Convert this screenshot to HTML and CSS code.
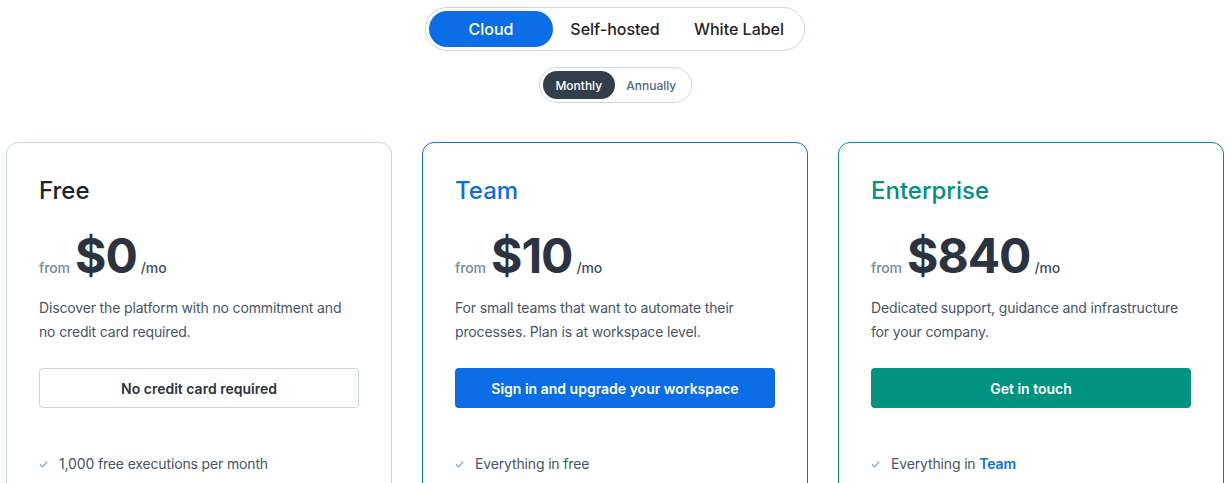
FILE: index.html
```html
<!DOCTYPE html>
<html lang="en">
<head>
<meta charset="utf-8">
<title>Pricing</title>
<link rel="stylesheet" href="styles.css">
</head>
<body>
<div class="page">
  <div class="switch">
    <button class="switch-btn active">Cloud</button>
    <button class="switch-btn">Self-hosted</button>
    <button class="switch-btn">White Label</button>
  </div>
  <div class="period">
    <button class="period-btn active">Monthly</button>
    <button class="period-btn">Annually</button>
  </div>
  <div class="cards">
    <div class="card card-free">
      <h2 class="card-title">Free</h2>
      <div class="price"><span class="from">from</span><span class="amount">$0</span><span class="per">/mo</span></div>
      <p class="desc">Discover the platform with no commitment and no credit card required.</p>
      <button class="cta cta-outline">No credit card required</button>
      <ul class="features">
        <li><svg class="check" viewBox="0 0 10 10"><path d="M1.5 5.2 L4 7.5 L8.5 2.5" fill="none" stroke="currentColor" stroke-width="1.4" stroke-linecap="round" stroke-linejoin="round"/></svg>1,000 free executions per month</li>
      </ul>
    </div>
    <div class="card card-team">
      <h2 class="card-title">Team</h2>
      <div class="price"><span class="from">from</span><span class="amount">$10</span><span class="per">/mo</span></div>
      <p class="desc">For small teams that want to automate their processes. Plan is at workspace level.</p>
      <button class="cta cta-blue">Sign in and upgrade your workspace</button>
      <ul class="features">
        <li><svg class="check" viewBox="0 0 10 10"><path d="M1.5 5.2 L4 7.5 L8.5 2.5" fill="none" stroke="currentColor" stroke-width="1.4" stroke-linecap="round" stroke-linejoin="round"/></svg>Everything in free</li>
      </ul>
    </div>
    <div class="card card-ent">
      <h2 class="card-title">Enterprise</h2>
      <div class="price"><span class="from">from</span><span class="amount">$840</span><span class="per">/mo</span></div>
      <p class="desc">Dedicated support, guidance and infrastructure for your company.</p>
      <button class="cta cta-teal">Get in touch</button>
      <ul class="features">
        <li><svg class="check" viewBox="0 0 10 10"><path d="M1.5 5.2 L4 7.5 L8.5 2.5" fill="none" stroke="currentColor" stroke-width="1.4" stroke-linecap="round" stroke-linejoin="round"/></svg>Everything in&nbsp;<strong class="hl">Team</strong></li>
      </ul>
    </div>
  </div>
</div>
</body>
</html>
```
FILE: styles.css
```css
* { box-sizing: border-box; }
html, body { margin: 0; padding: 0; background: #ffffff; }
body {
  font-family: Inter, "Noto Sans", "Liberation Sans", sans-serif;
  color: #1f2328;
  height: 483px;
  overflow: hidden;
}
.page {
  padding: 7px 6px 0;
  height: 483px;
  overflow: hidden;
  display: flex;
  flex-direction: column;
  align-items: center;
}
button { font-family: inherit; cursor: pointer; }

.switch {
  display: grid;
  grid-template-columns: repeat(3, 124px);
  padding: 3px;
  border: 1px solid #cdd8e4;
  border-radius: 22px;
}
.switch-btn {
  height: 36px;
  border: 0;
  background: transparent;
  border-radius: 18px;
  font-size: 16px;
  font-weight: 500;
  color: #1f2328;
}
.switch-btn.active { background: #0b6ee6; color: #ffffff; }

.period {
  margin-top: 16px;
  display: grid;
  grid-template-columns: repeat(2, 72.5px);
  padding: 3px;
  border: 1px solid #cdd8e4;
  border-radius: 18px;
}
.period-btn {
  height: 28px;
  border: 0;
  background: transparent;
  border-radius: 14px;
  font-size: 12px;
  font-weight: 500;
  color: #506885;
}
.period-btn.active { background: #333e4b; color: #ffffff; }

.cards {
  align-self: stretch;
  margin-top: 39px;
  display: grid;
  grid-template-columns: repeat(3, 1fr);
  gap: 30px;
}
.card {
  border: 1px solid #c6d5e4;
  border-radius: 12px;
  padding: 32px 32px 40px;
  min-height: 380px;
}
.card-team { border-color: #0b6ee6; }
.card-ent { border-color: #00917f; }

.card-title {
  margin: 0;
  font-size: 24px;
  line-height: 32px;
  font-weight: 500;
  color: #1f2328;
}
.card-team .card-title { color: #0b6ee6; }
.card-ent .card-title { color: #00917f; }

.price {
  margin-top: 25px;
  display: flex;
  align-items: baseline;
  height: 49px;
}
.from {
  font-size: 14px;
  font-weight: 500;
  color: #7189a5;
  margin-right: 5px;
  letter-spacing: -0.1px;
}
.amount {
  font-size: 48px;
  line-height: 48px;
  font-weight: 700;
  color: #2b3340;
  letter-spacing: -1px;
}
.per {
  font-size: 14px;
  font-weight: 500;
  color: #3c4a5e;
  margin-left: 4px;
  letter-spacing: -0.1px;
}
.desc {
  margin: 15px 0 0;
  font-size: 14px;
  line-height: 24px;
  color: #465569;
  min-height: 48px;
  letter-spacing: -0.15px;
}
.cta {
  display: block;
  width: 100%;
  margin-top: 24px;
  height: 40px;
  border-radius: 4px;
  font-size: 14px;
  font-weight: 600;
  border: 1px solid transparent;
}
.cta-outline { background: #ffffff; border-color: #c6d5e4; color: #2b3340; }
.cta-blue { background: #0b6ee6; color: #ffffff; }
.cta-teal { background: #00937f; color: #ffffff; }

.features {
  list-style: none;
  margin: 44px 0 0;
  padding: 0;
}
.features li {
  display: flex;
  align-items: center;
  font-size: 14px;
  line-height: 24px;
  color: #465569;
  letter-spacing: -0.15px;
}
.check {
  width: 9px;
  height: 9px;
  margin: 0 11px 0 0;
  color: #7ea7dd;
  flex: none;
}
.hl { color: #0b6ee6; font-weight: 600; }
```
